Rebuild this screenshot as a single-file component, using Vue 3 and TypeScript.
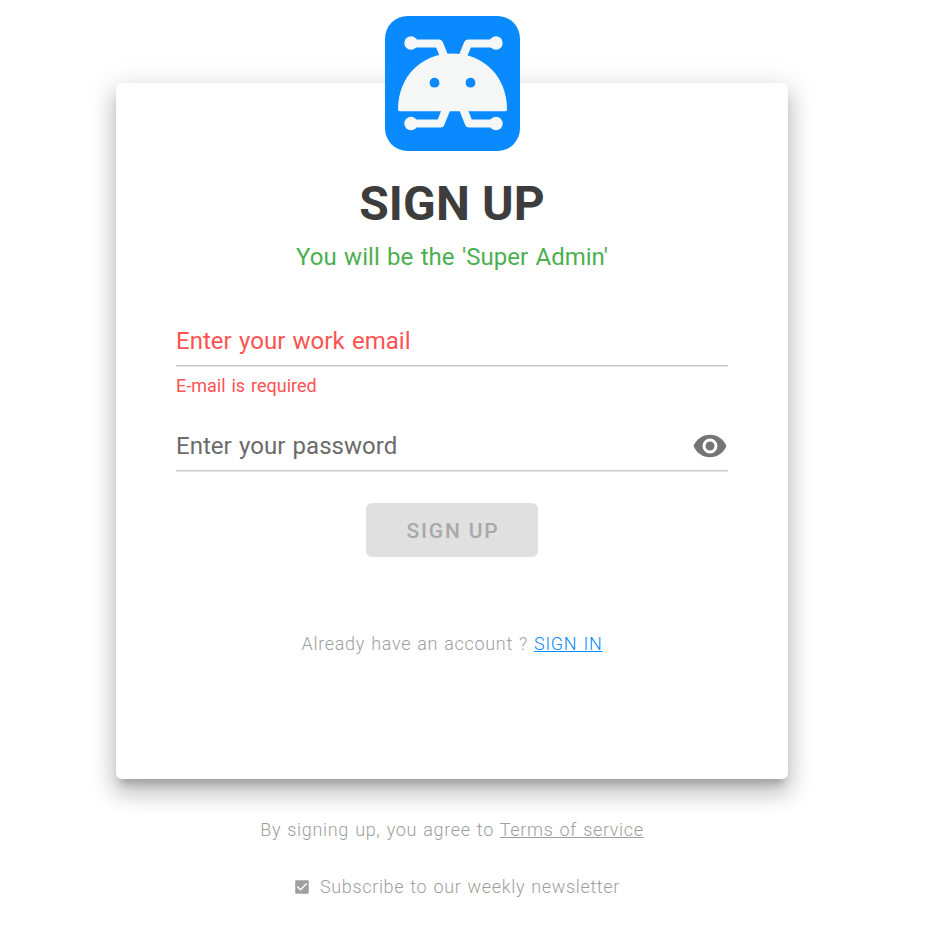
<script setup lang="ts">
import { ref } from 'vue'

const email = ref('')
const password = ref('')
const showPassword = ref(false)
const subscribed = ref(true)
</script>

<template>
  <main class="page">
    <section class="card">
      <svg class="logo" viewBox="0 0 135 135" aria-hidden="true">
        <rect width="135" height="135" rx="22.5" fill="#0a8aff" />
        <g fill="none" stroke="#f5f7f7" stroke-width="8.2" stroke-linejoin="round">
          <path d="M26 27.5H54L61 45" />
          <path d="M111 27.5H83L76 45" />
          <path d="M26 107.5H55.500L62.500 90" />
          <path d="M111 107.5H84L77 90" />
        </g>
        <g fill="#f5f7f7">
          <circle cx="26" cy="27" r="6.7" />
          <circle cx="111" cy="27" r="6.7" />
          <circle cx="26" cy="107.500" r="6.7" />
          <circle cx="111" cy="107.500" r="6.7" />
          <path d="M13 93.500C13 60 37 37.500 67.500 37.500S122 60 122 93.500Q122 95.200 120.300 95.200H14.700Q13 95.200 13 93.500Z" />
        </g>
        <g fill="#0a8aff">
          <circle cx="49.500" cy="66.700" r="4.900" />
          <circle cx="85.500" cy="66.700" r="4.900" />
        </g>
      </svg>
      <h1 class="title">SIGN UP</h1>
      <p class="role">You will be the 'Super Admin'</p>
      <form class="form" @submit.prevent>
        <div class="field">
          <input v-model="email" class="input invalid" type="email" placeholder="Enter your work email" />
        </div>
        <p class="error">E-mail is required</p>
        <div class="field">
          <input v-model="password" class="input" :type="showPassword ? 'text' : 'password'" placeholder="Enter your password" />
          <svg class="eye" viewBox="0 0 24 24" @click="showPassword = !showPassword">
            <path d="M12,9A3,3 0 0,0 9,12A3,3 0 0,0 12,15A3,3 0 0,0 15,12A3,3 0 0,0 12,9M12,17A5,5 0 0,1 7,12A5,5 0 0,1 12,7A5,5 0 0,1 17,12A5,5 0 0,1 12,17M12,4.5C7,4.5 2.730,7.610 1,12C2.730,16.390 7,19.500 12,19.500C17,19.500 21.270,16.390 23,12C21.270,7.610 17,4.500 12,4.500Z" />
          </svg>
        </div>
        <button class="submit" type="submit" disabled>SIGN UP</button>
      </form>
      <p class="note signin">Already have an account ? <a class="link" href="#">SIGN IN</a></p>
    </section>
    <p class="note terms">By signing up, you agree to <a href="#">Terms of service</a></p>
    <label class="note newsletter" @click="subscribed = !subscribed">
      <svg class="check" viewBox="0 0 24 24">
        <path v-if="subscribed" d="M10,17L5,12L6.410,10.580L10,14.170L17.590,6.580L19,8M20,3H4C3.400,3 3,3.400 3,4V20A1,1 0 0,0 4,21H20A1,1 0 0,0 21,20V4C21,3.400 20.600,3 20,3Z" />
        <path v-else d="M19,3H5A2,2 0 0,0 3,5V19A2,2 0 0,0 5,21H19A2,2 0 0,0 21,19V5A2,2 0 0,0 19,3M19,5V19H5V5Z" />
      </svg>
      <span>Subscribe to our weekly newsletter</span>
    </label>
  </main>
</template>

<style>
body {
  margin: 0;
  background: #fff;
}
</style>

<style scoped>
.page {
  box-sizing: border-box;
  width: 904px;
  height: 931px;
  padding-top: 83px;
  display: flex;
  flex-direction: column;
  align-items: center;
  font-family: Roboto, "Liberation Sans", sans-serif;
  overflow: hidden;
}
.card {
  box-sizing: border-box;
  width: 672px;
  height: 696px;
  flex: none;
  padding: 0 60px;
  border-radius: 6px;
  background: #fff;
  display: flex;
  flex-direction: column;
  align-items: center;
  box-shadow: 0 9px 9px -4.5px rgba(0, 0, 0, 0.2), 0 15px 21px 1.5px rgba(0, 0, 0, 0.14), 0 6px 27px 4.5px rgba(0, 0, 0, 0.12);
}
.logo {
  width: 135px;
  height: 135px;
  flex: none;
  margin-top: -67px;
}
.title {
  margin: 25px 0 0;
  font-size: 48px;
  line-height: 56px;
  font-weight: 700;
  letter-spacing: 0.15px;
  color: #3d3d3d;
}
.role {
  margin: 7px 0 0;
  font-size: 24px;
  line-height: 36px;
  letter-spacing: 0.02px;
  word-spacing: 1.4px;
  color: #4caf50;
}
.form {
  width: 100%;
  margin-top: 42px;
  display: flex;
  flex-direction: column;
  align-items: center;
}
.field {
  width: 100%;
  height: 50px;
  box-sizing: border-box;
  display: flex;
  align-items: flex-start;
  border-bottom: 1px solid #e3e3e3;
  box-shadow: inset 0 -1px 0 #c8c8c8;
}
.input {
  flex: 1;
  min-width: 0;
  height: 48px;
  padding: 0;
  border: 0;
  outline: 0;
  background: none;
  font: 400 24px/48px Roboto, "Liberation Sans", sans-serif;
  letter-spacing: 0.02px;
  word-spacing: 1.3px;
  color: #333;
}
.input::placeholder {
  color: #6b6b6b;
  opacity: 1;
}
.input.invalid::placeholder {
  color: #ff5252;
}
.eye {
  width: 36px;
  height: 36px;
  margin-top: 6px;
  fill: #757575;
}
.error {
  width: 100%;
  height: 36px;
  margin: 0 0 19px;
  font-size: 18px;
  line-height: 37px;
  letter-spacing: 0.02px;
  word-spacing: 1.3px;
  color: #ff5252;
}
.submit {
  width: 172px;
  height: 54px;
  margin-top: 31px;
  padding: 2px 0 0 2px;
  border: 0;
  border-radius: 6px;
  background: #e0e0e0;
  color: #a8a8a8;
  font: 500 21px/52px Roboto, "Liberation Sans", sans-serif;
  letter-spacing: 1.8px;
}
.note {
  margin: 0;
  font-size: 18px;
  line-height: 28px;
  font-weight: 300;
  letter-spacing: 0.67px;
  word-spacing: 1.1px;
  color: #9e9e9e;
}
.note a {
  color: inherit;
}
.signin {
  margin-top: 73px;
}
.signin .link {
  color: #0a8aff;
}
.terms {
  margin-top: 37px;
}
.newsletter {
  margin-top: 29px;
  padding-left: 9px;
  display: flex;
  align-items: center;
  gap: 9px;
  letter-spacing: 0.65px;
}
.check {
  width: 18px;
  height: 18px;
  fill: #9e9e9e;
}
</style>
